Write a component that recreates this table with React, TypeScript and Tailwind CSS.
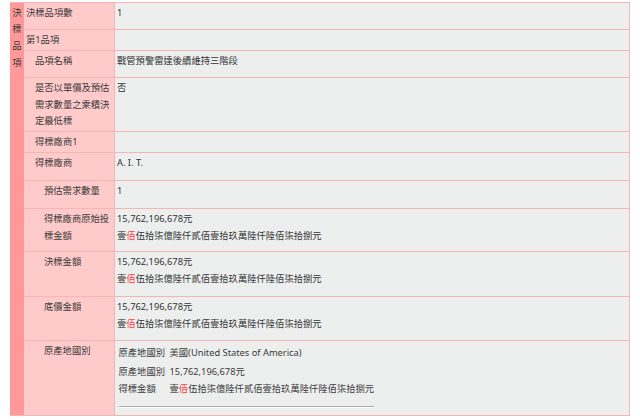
import React from "react";

const B = "border-[#f4b4b8]";

function Row({
  h,
  indent,
  label,
  children,
  last,
}: {
  h: string;
  indent: string;
  label: React.ReactNode;
  children?: React.ReactNode;
  last?: boolean;
}) {
  return (
    <div className={`flex ${h} ${last ? "" : "border-b " + B}`}>
      <div className={`w-[91px] shrink-0 bg-[#ffcaca] border-r ${B} pt-[2px] ${indent} text-[#3a3a3a] whitespace-nowrap`}>
        {label}
      </div>
      <div className="flex-1 bg-[#edefef] pt-[2px] pl-[2px] text-[#333]">{children}</div>
    </div>
  );
}

function Amount() {
  return (
    <>
      <div>15,762,196,678元</div>
      <div>
        壹<span className="text-[#ff3b3b]">佰</span>伍拾柒億陸仟貳佰壹拾玖萬陸仟陸佰柒拾捌元
      </div>
    </>
  );
}

export default function App() {
  return (
    <div className="w-[640px] h-[420px] bg-white pt-[2px] pl-[10px] font-['Noto_Sans','Noto_Sans_CJK_TC',sans-serif] text-[9.3px] leading-[16.7px]">
      <div className={`flex w-[620px] border-t border-r border-b ${B}`}>
        <div className="w-[14px] shrink-0 bg-[#ff9999] pt-[1.5px] flex flex-col items-center text-[#3a3a3a]">
          <div>決</div>
          <div>標</div>
          <div>品</div>
          <div>項</div>
        </div>
        <div className="flex-1 flex flex-col">
          <Row h="h-[27px]" indent="pl-[2px]" label="決標品項數">
            1
          </Row>
          <Row h="h-[21px]" indent="pl-[2px]" label="第1品項" />
          <Row h="h-[27px]" indent="pl-[11px]" label="品項名稱">
            戰管預警雷達後續維持三階段
          </Row>
          <Row
            h="h-[54px]"
            indent="pl-[11px]"
            label={
              <>
                <div>是否以單價及預估</div>
                <div>需求數量之乘積決</div>
                <div>定最低標</div>
              </>
            }
          >
            否
          </Row>
          <Row h="h-[21px]" indent="pl-[11px]" label="得標廠商1" />
          <Row h="h-[28px]" indent="pl-[11px]" label="得標廠商">
            A. I. T.
          </Row>
          <Row h="h-[28px]" indent="pl-[20px]" label="預估需求數量">
            1
          </Row>
          <Row
            h="h-[43px]"
            indent="pl-[20px]"
            label={
              <>
                <div>得標廠商原始投</div>
                <div>標金額</div>
              </>
            }
          >
            <Amount />
          </Row>
          <Row h="h-[45px]" indent="pl-[20px]" label="決標金額">
            <Amount />
          </Row>
          <Row h="h-[44px]" indent="pl-[20px]" label="底價金額">
            <Amount />
          </Row>
          <Row h="h-[74px]" indent="pl-[20px]" label="原產地國別" last>
            <div className="pl-[1.5px] pt-[1.5px] text-[#3a3a3a]">
              <div className="grid grid-cols-[51px_1fr]">
                <div>原產地國別</div>
                <div>美國(United States of America)</div>
              </div>
              <div className="grid grid-cols-[51px_1fr] mt-[3px]">
                <div>原產地國別</div>
                <div>15,762,196,678元</div>
                <div>得標金額</div>
                <div>
                  壹<span className="text-[#ff3b3b]">佰</span>伍拾柒億陸仟貳佰壹拾玖萬陸仟陸佰柒拾捌元
                </div>
              </div>
              <div className="mt-[8px] w-[255px] border-t border-[#a9a9a9] border-b-white border-b" />
            </div>
          </Row>
        </div>
      </div>
    </div>
  );
}
